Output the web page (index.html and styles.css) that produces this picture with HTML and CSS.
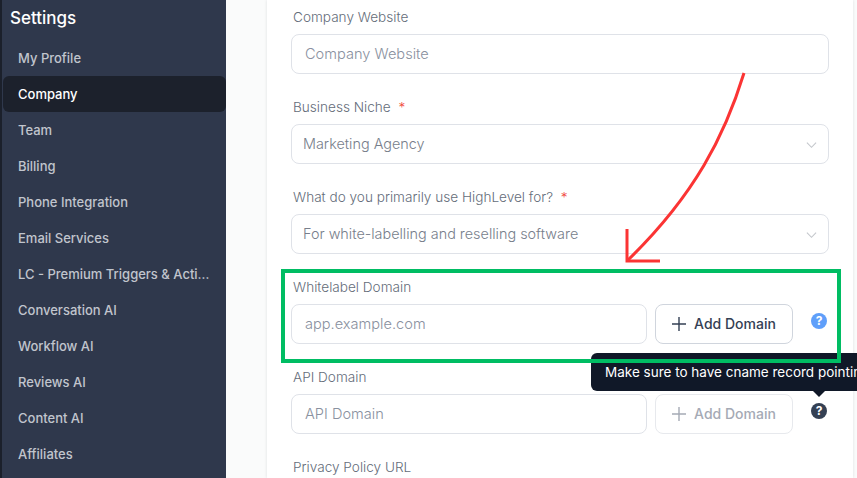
FILE: index.html
```html
<!DOCTYPE html>
<html lang="en">

<head>
    <meta charset="utf-8">
    <title>Settings</title>
    <link rel="stylesheet" href="styles.css">
</head>

<body>
    <aside class="sidebar">
        <h1 class="side-title">Settings</h1>
        <nav class="side-nav">
            <a class="side-link">My Profile</a>
            <a class="side-link active">Company</a>
            <a class="side-link">Team</a>
            <a class="side-link">Billing</a>
            <a class="side-link">Phone Integration</a>
            <a class="side-link">Email Services</a>
            <a class="side-link">LC - Premium Triggers &amp; Actions</a>
            <a class="side-link">Conversation AI</a>
            <a class="side-link">Workflow AI</a>
            <a class="side-link">Reviews AI</a>
            <a class="side-link">Content AI</a>
            <a class="side-link">Affiliates</a>
        </nav>
    </aside>

    <main class="content">
        <section class="card">
            <div class="field">
                <label class="label">Company Website</label>
                <div class="input placeholder">Company Website</div>
            </div>
            <div class="field">
                <label class="label">Business Niche <span class="req">*</span></label>
                <div class="input select">Marketing Agency
                    <svg class="chevron" viewBox="0 0 12 8"><path d="M1 1.5l5 5 5-5" /></svg>
                </div>
            </div>
            <div class="field">
                <label class="label">What do you primarily use HighLevel for? <span class="req">*</span></label>
                <div class="input select">For white-labelling and reselling software
                    <svg class="chevron" viewBox="0 0 12 8"><path d="M1 1.5l5 5 5-5" /></svg>
                </div>
            </div>
            <div class="field">
                <label class="label">Whitelabel Domain</label>
                <div class="domain-row">
                    <div class="input placeholder grow">app.example.com</div>
                    <button class="add-btn">
                        <svg class="plus" viewBox="0 0 14 14"><path d="M7 0v14M0 7h14" /></svg>
                        <span class="btn-text">Add Domain</span>
                    </button>
                    <svg class="help blue" viewBox="0 0 16 16">
                        <circle cx="8" cy="8" r="8" />
                        <text x="8" y="12" text-anchor="middle">?</text>
                    </svg>
                </div>
            </div>
            <div class="field">
                <label class="label">API Domain</label>
                <div class="domain-row">
                    <div class="input placeholder grow">API Domain</div>
                    <button class="add-btn disabled">
                        <svg class="plus" viewBox="0 0 14 14"><path d="M7 0v14M0 7h14" /></svg>
                        <span class="btn-text">Add Domain</span>
                    </button>
                    <svg class="help dark" viewBox="0 0 16 16">
                        <circle cx="8" cy="8" r="8" />
                        <text x="8" y="12" text-anchor="middle">?</text>
                    </svg>
                </div>
            </div>
            <div class="field last">
                <label class="label">Privacy Policy URL</label>
            </div>
        </section>
    </main>

    <!-- annotations drawn over the screenshot -->
    <div class="tooltip">Make sure to have cname record pointing to our server</div>
    <div class="tooltip-tip"></div>
    <div class="green-box"></div>
    <svg class="arrow" viewBox="0 0 857 478">
        <path d="M744 73C725 135 695 195 627 261" />
        <path d="M627 229V261H660" />
    </svg>
</body>

</html>
```

FILE: styles.css
```css
html,
body {
    margin: 0;
    height: 478px;
    overflow: hidden;
}

body {
    display: flex;
    background: #fff;
    font-family: Inter, "Liberation Sans", sans-serif;
    position: relative;
}

.sidebar {
    width: 226px;
    height: 478px;
    flex-shrink: 0;
    box-sizing: border-box;
    background: #2f384c;
    border-left: 2px solid #1b202b;
    overflow: hidden;
}

.side-title {
    margin: 0;
    padding: 8px 0 0 8px;
    height: 40px;
    box-sizing: border-box;
    font-size: 17px;
    line-height: 20px;
    font-weight: 500;
    color: #fff;
}

.side-nav {
    display: flex;
    flex-direction: column;
}

.side-link {
    display: block;
    height: 36px;
    line-height: 36px;
    padding: 0 10px 0 15px;
    margin-left: 1px;
    font-size: 13px;
    font-weight: 500;
    color: #c1c5cd;
    white-space: nowrap;
    overflow: hidden;
    text-overflow: ellipsis;
    border-radius: 6px;
}

.side-link.active {
    background: #1c212c;
    color: #fff;
}

.content {
    flex: 1;
    background: #fafbfb;
    padding-left: 41px;
    padding-right: 4px;
}

.card {
    background: #fff;
    height: 478px;
    box-sizing: border-box;
    padding: 7px 24px 0 24px;
    box-shadow: 0 0 3px rgba(16, 24, 40, 0.12);
}

.field {
    height: 90px;
}

.field.last {
    height: 20px;
}

.label {
    display: block;
    height: 20px;
    line-height: 20px;
    font-size: 13.6px;
    font-weight: 300;
    color: #656d7a;
    margin-left: 2px;
    margin-bottom: 7px;
}

.req {
    color: #f04438;
    margin-left: 4px;
}

.input {
    position: relative;
    height: 40px;
    box-sizing: border-box;
    border: 1px solid #dfe2e8;
    border-radius: 8px;
    background: #fff;
    padding: 0 11px;
    line-height: 38px;
    font-size: 14.4px;
    font-weight: 300;
    color: #777e8b;
}

.input.placeholder {
    padding: 0 13px;
    font-size: 14.6px;
    color: #8a91a0;
}

.grow {
    flex: 1;
}

.chevron {
    position: absolute;
    right: 11px;
    top: 16px;
    width: 11px;
    height: 8px;
    fill: none;
    stroke: #c4c7cc;
    stroke-width: 1.2;
}

.domain-row {
    display: flex;
    align-items: center;
    padding-right: 2px;
}

.add-btn {
    width: 138px;
    height: 40px;
    margin-left: 8px;
    margin-right: 18px;
    display: flex;
    align-items: center;
    justify-content: center;
    gap: 8px;
    background: #fff;
    border: 1px solid #d0d5dd;
    border-radius: 8px;
    font-family: inherit;
    font-size: 14px;
    font-weight: 500;
    color: #344054;
}

.btn-text {
    margin-top: -2px;
}

.add-btn.disabled {
    border-color: #e7e9ed;
    color: #a5aab5;
}

.plus {
    width: 14px;
    height: 14px;
    fill: none;
    stroke: currentColor;
    stroke-width: 1.4;
}

.help {
    width: 16px;
    height: 16px;
    flex-shrink: 0;
    margin-top: -6px;
}

.help text {
    fill: #fff;
    font-size: 12px;
    font-weight: 700;
    font-family: Inter, sans-serif;
}

.help.blue circle {
    fill: #5f9ffa;
}

.help.dark circle {
    fill: #344054;
}

.tooltip {
    position: absolute;
    left: 591px;
    top: 353px;
    width: 266px;
    height: 38px;
    box-sizing: border-box;
    padding: 0 0 0 14px;
    background: #101828;
    border-radius: 6px 0 0 6px;
    color: #fff;
    font-size: 13.5px;
    font-weight: 400;
    line-height: 38px;
    white-space: nowrap;
    overflow: hidden;
}

.tooltip-tip {
    position: absolute;
    left: 813px;
    top: 391px;
    width: 0;
    height: 0;
    border-left: 6px solid transparent;
    border-right: 6px solid transparent;
    border-top: 6px solid #101828;
}

.green-box {
    position: absolute;
    left: 281px;
    top: 269px;
    width: 560px;
    height: 94px;
    box-sizing: border-box;
    border: 4px solid #00bd63;
}

.arrow {
    position: absolute;
    left: 0;
    top: 0;
    width: 857px;
    height: 478px;
    fill: none;
    stroke: #fb3434;
    stroke-width: 3;
}
```
